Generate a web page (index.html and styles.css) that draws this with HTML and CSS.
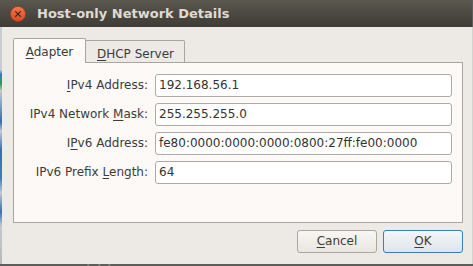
FILE: index.html
```html
<!DOCTYPE html>
<html>
<head>
<meta charset="utf-8">
<link rel="stylesheet" href="styles.css">
</head>
<body>
<div class="screen">
  <div class="titlebar">
    <svg class="close" width="18" height="18" viewBox="0 0 18 18">
      <defs>
        <linearGradient id="cg" x1="0" y1="0" x2="0" y2="1">
          <stop offset="0" stop-color="#f47a4e"/>
          <stop offset="1" stop-color="#d9461f"/>
        </linearGradient>
      </defs>
      <circle cx="9" cy="9" r="7.6" fill="url(#cg)" stroke="#9a3b1e" stroke-width="0.8"/>
      <path d="M6.6 6.6 L11.4 11.4 M11.4 6.6 L6.6 11.4" stroke="#3b2b25" stroke-width="1.3" stroke-linecap="round"/>
    </svg>
    <span class="title">Host-only Network Details</span>
  </div>
  <div class="main">
    <div class="desk-left"></div>
    <div class="window">
      <div class="tabs">
        <div class="tab tab-active"><u>A</u>dapter</div>
        <div class="tab tab-idle"><u>D</u>HCP Server</div>
      </div>
      <div class="panel">
        <div class="form">
          <label class="lbl"><u>I</u>Pv4 Address:</label>
          <div class="field">192.168.56.1</div>
          <label class="lbl">IPv4 Network <u>M</u>ask:</label>
          <div class="field">255.255.255.0</div>
          <label class="lbl">I<u>P</u>v6 Address:</label>
          <div class="field">fe80:0000:0000:0000:0800:27ff:fe00:0000</div>
          <label class="lbl">IPv6 Prefix <u>L</u>ength:</label>
          <div class="field">64</div>
        </div>
      </div>
      <div class="buttons">
        <div class="btn"><u>C</u>ancel</div>
        <div class="btn btn-default"><u>O</u>K</div>
      </div>
    </div>
    <div class="desk-right"></div>
  </div>
  <div class="desk-bottom"></div>
</div>
</body>
</html>
```

FILE: styles.css
```css
html, body {
  margin: 0;
  padding: 0;
}
body {
  background: #5d5d5d;
  font-family: "DejaVu Sans", sans-serif;
  font-size: 12px;
  color: #3c3c3c;
}
.screen {
  width: 473px;
  height: 266px;
  display: flex;
  flex-direction: column;
  overflow: hidden;
}
.titlebar {
  height: 27px;
  width: 472px;
  display: flex;
  align-items: center;
  background: linear-gradient(#5b5850, #46433d 70%, #3f3d38);
  flex: none;
}
.close {
  margin-left: 9px;
  flex: none;
}
.title {
  margin-left: 10px;
  font-weight: bold;
  font-size: 13px;
  line-height: 27px;
  color: #dfdbd2;
  white-space: nowrap;
}
.main {
  display: flex;
  height: 237px;
  flex: none;
}
.desk-left {
  width: 2px;
  background: linear-gradient(#c9ccd0 0%, #c9ccd0 18%, #2d7fc4 20%, #3a9a4a 24%, #c4c8cc 27%, #2f6fb8 40%, #c4c8cc 44%, #2f6fb8 52%, #3a7fc0 64%, #c4c8cc 70%, #3172b5 78%, #c4c8cc 84%, #b8b8b8 100%);
}
.desk-right {
  width: 1px;
  background: #d4d3d0;
}
.window {
  width: 470px;
  box-sizing: border-box;
  background: #edeae5;
  padding: 11px 9px 0 11px;
  display: flex;
  flex-direction: column;
}
.tabs {
  display: flex;
  align-items: flex-end;
}
.tab {
  box-sizing: border-box;
  border: 1px solid #a9a6a1;
  border-bottom: none;
  border-radius: 2px 2px 0 0;
  text-align: center;
  line-height: 14px;
  padding-top: 6px;
  color: #3c3c3c;
  white-space: nowrap;
}
.tab-active {
  width: 73px;
  height: 25px;
  margin-bottom: -1px;
  background: #fcf9f6;
  position: relative;
  z-index: 1;
}
.tab-idle {
  width: 100px;
  height: 22px;
  margin-left: -1px;
  background: #edeae6;
  padding-left: 1px;
}
.panel {
  box-sizing: border-box;
  width: 450px;
  height: 161px;
  border: 1px solid #a9a6a1;
  background: #fcf9f6;
}
.form {
  display: grid;
  grid-template-columns: 134px 297px;
  grid-auto-rows: 23px;
  column-gap: 7px;
  row-gap: 6px;
  padding-top: 11px;
}
.lbl {
  text-align: right;
  line-height: 23px;
  white-space: nowrap;
}
.field {
  box-sizing: border-box;
  border: 1px solid #aeaba6;
  border-radius: 3px;
  background: #ffffff;
  line-height: 21px;
  padding-left: 3px;
  white-space: nowrap;
  overflow: hidden;
  color: #333;
}
.buttons {
  display: flex;
  justify-content: flex-end;
  gap: 6px;
  margin-top: 7px;
}
.btn {
  box-sizing: border-box;
  width: 80px;
  height: 23px;
  border: 1px solid #aaa6a0;
  border-radius: 3px;
  background: linear-gradient(#f8f6f3, #e9e6e1);
  text-align: center;
  line-height: 21px;
  color: #3c3c3c;
}
.btn-default {
  border-color: #3e7cb2;
  background: linear-gradient(#f4f6f8, #dee5eb);
}
u {
  text-decoration: underline;
  text-underline-offset: 2px;
}
.desk-bottom {
  height: 2px;
  background: linear-gradient(90deg, #5d5d5d 0, #5d5d5d 87px, #8a8a8a 88px, #5d5d5d 90px, #5d5d5d 98px, #8a8a8a 99px, #5d5d5d 101px, #5d5d5d 108px, #8a8a8a 109px, #5d5d5d 111px);
  flex: none;
}
```
